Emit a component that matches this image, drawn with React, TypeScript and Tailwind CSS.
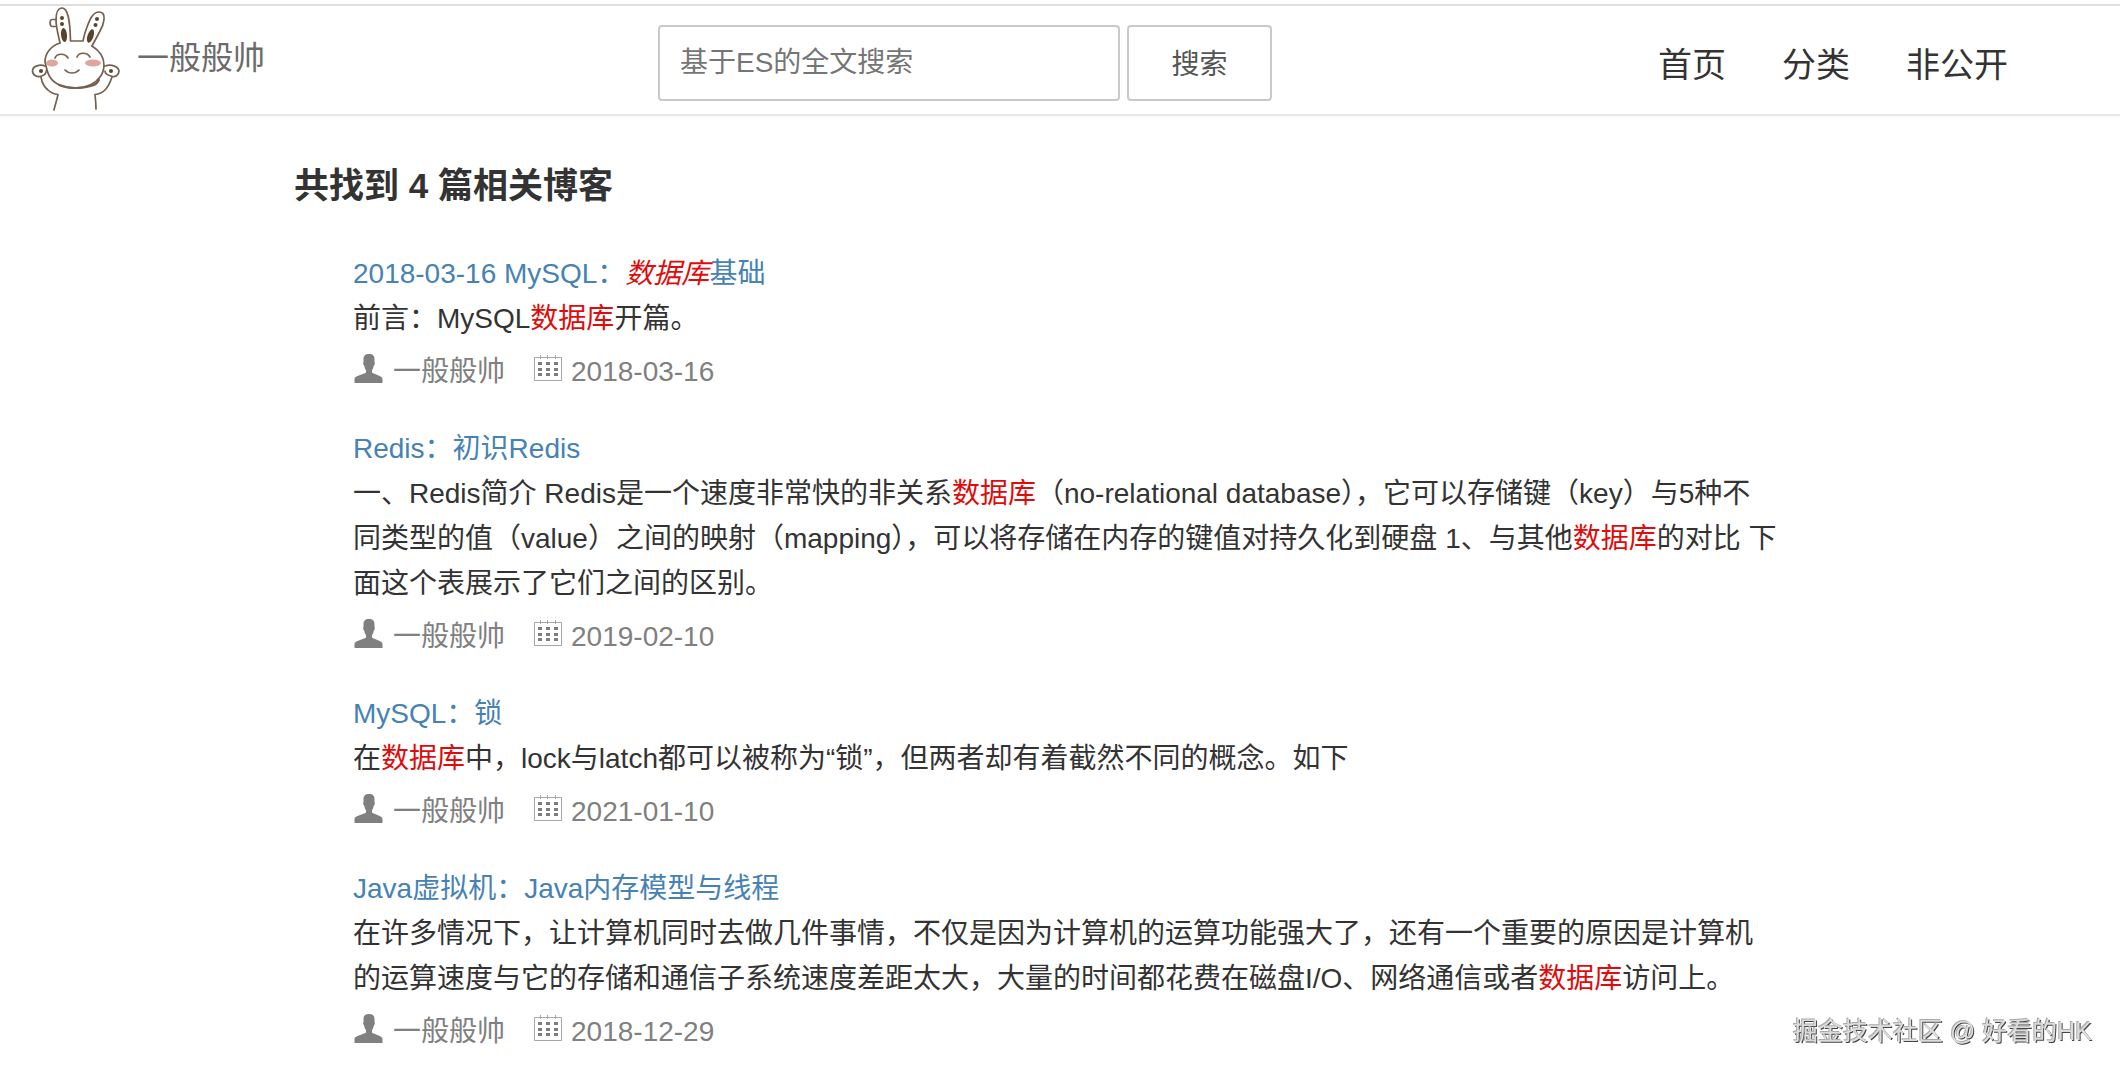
import { Fragment, type ReactNode } from "react";

type Part = string | { hit: string };

type Post = {
  title: ReactNode;
  summary: Part[];
  date: string;
};

const hit = { hit: "数据库" };

const posts: Post[] = [
  {
    title: (
      <>
        2018-03-16 MySQL：<em className="text-[#e00b0b]">数据库</em>基础
      </>
    ),
    summary: ["前言：MySQL", hit, "开篇。"],
    date: "2018-03-16",
  },
  {
    title: "Redis：初识Redis",
    summary: [
      "一、Redis简介 Redis是一个速度非常快的非关系",
      hit,
      "（no-relational database），它可以存储键（key）与5种不\n同类型的值（value）之间的映射（mapping），可以将存储在内存的键值对持久化到硬盘 1、与其他",
      hit,
      "的对比 下面这个表展示了它们之间的区别。",
    ],
    date: "2019-02-10",
  },
  {
    title: "MySQL：锁",
    summary: ["在", hit, "中，lock与latch都可以被称为“锁”，但两者却有着截然不同的概念。如下"],
    date: "2021-01-10",
  },
  {
    title: "Java虚拟机：Java内存模型与线程",
    summary: [
      "在许多情况下，让计算机同时去做几件事情，不仅是因为计算机的运算功能强大了，还有一个重要的原因是计算机的运算速度与它的存储和通信子系统速度差距太大，大量的时间都花费在磁盘I/O、网络通信或者",
      hit,
      "访问上。",
    ],
    date: "2018-12-29",
  },
];

function Rabbit() {
  return (
    <svg viewBox="0 6 100 108" className="h-[108px] w-[100px] shrink-0" fill="none" stroke="#76604f" strokeWidth="1.7" strokeLinecap="round" strokeLinejoin="round" aria-hidden="true">
      <path d="M35 43C33 34 31 27 31 20c0-7 2-12 6-12 6 0 8 12 8.500 33H58c1-5 2-9 4-14 3-8 6-15 12-15 9 0 4 14 1 19-3 6-6 11-8 15" />
      <path d="M31 19.500h-4c-3 0-2 7 0 7h4" />
      <path d="M35 43C26 46 20 53 20 62c1 3 2 11 5 15 4 7 14 11 25 11 12 0 20-4 25-11 3-4 4-8 4-12 0-8-4-14-12-19" />
      <path d="M34 85c10 4 24 4 35 0 3-1 4-3 5-5" strokeWidth="2" />
      <path d="M20 66c-5-2-12.500 0-12.500 5 0 4 5 7 9 5 4-1 5-4 5-6M80 66c6-2 13 0 14 5 0 4-4 7-8 5-4-1-6-3-6-5" />
      <path d="M16 77c1 6 3 10 7 13 3 3 6 4 10 4.500C32 100 30 105 29 110M87 77c-2 6-4 10-7 13-3 3-6 4-10 4.500.5 5 1 9 1 14.500" />
      <path d="M30 58c2-5 10-5 13 0M52 57c2-5 10-5 13 0M40 70c4 4 10 4 14 0" />
      <g stroke="none" fill="#5a432c">
        <circle cx="37" cy="18" r="2" />
        <circle cx="37" cy="24" r="2" />
        <circle cx="72" cy="19" r="2" />
        <circle cx="70.500" cy="25" r="2" />
        <circle cx="16" cy="71" r="2" />
        <circle cx="86" cy="71" r="2" />
        <ellipse cx="39" cy="35" rx="3" ry="7" transform="rotate(-6 39 35)" />
        <ellipse cx="65.500" cy="36" rx="3" ry="7" transform="rotate(18 65.500 36)" />
      </g>
      <g stroke="none" fill="#dfa5a0">
        <ellipse cx="27" cy="63" rx="6" ry="3.500" />
        <ellipse cx="68" cy="63" rx="8" ry="3.500" />
      </g>
    </svg>
  );
}

function UserIcon() {
  return (
    <svg viewBox="0 0 30 30" className="mt-1 h-[30px] w-[30px] shrink-0 fill-[#808080]" aria-hidden="true">
      <path d="M16 1c4 0 5.500 2 5.500 5v3c1 1 0 3-.8 4-.4 2-.8 3-1.700 4v2.500c2 2 10.500 3 10.500 6.500v4H1.500v-4c0-3.500 9.500-4.500 11.500-6.500V17c-1-1-1.300-2-1.700-4-.8-1-1.800-3-.8-4V6c0-3 1.500-5 5.500-5Z" />
    </svg>
  );
}

function CalendarIcon() {
  return (
    <svg viewBox="0 0 30 30" className="mt-1 h-[30px] w-[30px] shrink-0" aria-hidden="true">
      <path d="M1.500 4.500h27v23h-27ZM7.500 2v4M14.500 2v4M22.500 2v4" fill="none" stroke="#a6a6a6" />
      <path d="M5 9h4v3H5Zm8 0h4v3h-4Zm8 0h4v3h-4ZM5 15h4v3H5Zm8 0h4v3h-4Zm8 0h4v3h-4ZM5 20h4v3H5Zm8 0h4v3h-4Zm8 0h4v3h-4Z" fill="#7d7d7d" />
    </svg>
  );
}

export default function App() {
  return (
    <div lang="zh-CN" className="min-h-screen bg-white pt-1 font-['Liberation_Sans','Noto_Sans_CJK_SC',sans-serif] text-[28px] leading-[45px] text-[#333]">
      <header className="flex h-28 items-center justify-between border-t-2 border-b-2 border-t-[#dedede] border-b-[#e7e7e7] pr-28 pl-[25px] shadow-[0_1px_2px_rgba(0,0,0,0.04)]">
        <a href="#" className="flex w-[633px] items-center gap-3 text-[32px] text-[#6b6b6b]">
          <Rabbit />
          <span className="pb-1">一般般帅</span>
        </a>
        <form className="flex grow gap-[7px] pt-[5px]" onSubmit={(e) => e.preventDefault()}>
          <input
            type="search"
            aria-label="搜索"
            placeholder="基于ES的全文搜索"
            className="h-[76px] w-[462px] rounded border-2 border-[#c9c9c9] px-5 placeholder:text-[#757575]"
          />
          <button type="submit" className="h-[76px] w-[145px] rounded border-2 border-[#c9c9c9] pt-1 text-[#555]">
            搜索
          </button>
        </form>
        <nav className="flex gap-14 pt-[10px] text-[34px]">
          <a href="#">首页</a>
          <a href="#">分类</a>
          <a href="#">非公开</a>
        </nav>
      </header>

      <main className="mx-auto max-w-[1532px] pt-[47px] pb-4">
        <h1 className="text-[35px] leading-[46px] font-bold">共找到 4 篇相关博客</h1>
        <ul className="mt-[42px] flex flex-col gap-8 pr-[46px] pl-[59px]">
          {posts.map((post) => (
            <li key={post.date}>
              <h2>
                <a href="#" className="text-[#4682b4]">
                  {post.title}
                </a>
              </h2>
              <p className="whitespace-pre-line">
                {post.summary.map((part, i) =>
                  typeof part === "string" ? (
                    <Fragment key={i}>{part}</Fragment>
                  ) : (
                    <span key={i} className="text-[#e00b0b]">
                      {part.hit}
                    </span>
                  ),
                )}
              </p>
              <div className="mt-2 flex text-[#808080]">
                <UserIcon />
                <span className="ml-[10px]">一般般帅</span>
                <span className="ml-7 flex gap-2">
                  <CalendarIcon />
                  <time dateTime={post.date}>{post.date}</time>
                </span>
              </div>
            </li>
          ))}
        </ul>
      </main>

      <div className="fixed right-7 bottom-5 text-[25px] leading-[42px] text-[#dcdcdc] [text-shadow:-1px_-1px_0_#aaa,1px_1px_0_#444]">
        掘金技术社区 @ 好看的HK
      </div>
    </div>
  );
}
